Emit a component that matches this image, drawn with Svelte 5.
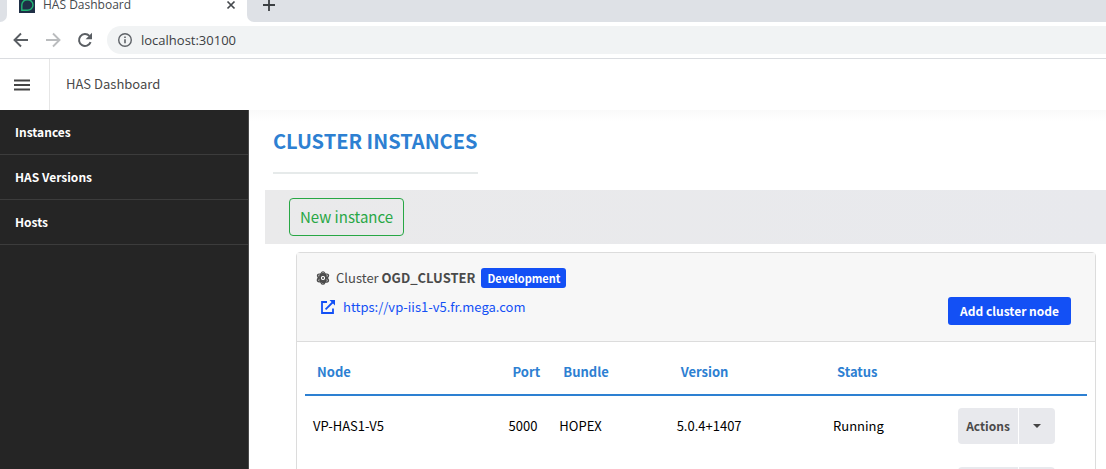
<script>
  const menu = ["Instances", "HAS Versions", "Hosts"];
  const columns = ["Node", "Port", "Bundle", "Version", "Status"];

  let address = $state("localhost:30100");
  let nodes = $state([
    { name: "VP-HAS1-V5", port: "5000", bundle: "HOPEX", version: "5.0.4+1407", status: "Running" },
    { name: "", port: "", bundle: "", version: "", status: "" },
  ]);
</script>

<div class="window">
  <div class="tabs">
    <div class="tab-prev"></div>
    <div class="tab">
      <svg class="favicon" width="16" height="16" viewBox="0 0 16 16">
        <rect width="16" height="16" fill="#1f2f46" />
        <path d="M2.800 13.300V8a5.600 5.300 0 1 1 5.600 5.300z" fill="none" stroke="#21b573" stroke-width="1.400" />
      </svg>
      <span class="tab-title">HAS Dashboard</span>
      <button class="plain" aria-label="Close tab">
        <svg width="10" height="10" viewBox="0 0 10 10"><path d="M1.500 1.500l7 7M8.500 1.500l-7 7" stroke="#45494d" stroke-width="1.700" /></svg>
      </button>
    </div>
    <div class="tab-rest">
      <button class="plain" aria-label="New tab">
        <svg width="12" height="12" viewBox="0 0 12 12"><path d="M6 0v12M0 6h12" stroke="#3c4043" stroke-width="1.800" /></svg>
      </button>
    </div>
  </div>

  <div class="browser-bar">
    <button class="plain" aria-label="Back">
      <svg width="16" height="16" viewBox="0 0 16 16"><path d="M15 8H2M8 1.500L1.500 8 8 14.500" fill="none" stroke="#5a5e63" stroke-width="1.900" /></svg>
    </button>
    <button class="plain" aria-label="Forward">
      <svg width="16" height="16" viewBox="0 0 16 16"><path d="M1 8h13M8 1.500L14.500 8 8 14.500" fill="none" stroke="#babcbe" stroke-width="1.900" /></svg>
    </button>
    <button class="plain" aria-label="Reload">
      <svg width="16" height="16" viewBox="0 0 16 16">
        <path d="M13.600 10.200A6 6 0 1 1 12.400 3.900" fill="none" stroke="#5a5e63" stroke-width="2" />
        <path d="M15 .8v6.400H8.600z" fill="#5a5e63" />
      </svg>
    </button>
    <label class="address">
      <svg width="16" height="16" viewBox="0 0 16 16">
        <circle cx="8" cy="8" r="6.300" fill="none" stroke="#5f6368" stroke-width="1.400" />
        <path d="M8 7.200v4M8 4.400v1.500" stroke="#5f6368" stroke-width="1.600" />
      </svg>
      <span class="url"><input aria-label="Address" bind:value={address} /></span>
    </label>
  </div>

  <header class="app-bar">
    <button class="burger" aria-label="Toggle menu">
      <svg width="16" height="12" viewBox="0 0 16 12"><path d="M0 1.500h16M0 6h16M0 10.500h16" stroke="#444" stroke-width="1.800" /></svg>
    </button>
    <span class="app-name">HAS Dashboard</span>
  </header>

  <div class="body">
    <nav class="sidebar">
      {#each menu as item}
        <a href="#{item}">{item}</a>
      {/each}
    </nav>

    <main>
      <h1>CLUSTER INSTANCES</h1>

      <div class="toolbar">
        <button class="new-instance">New instance</button>
      </div>

      <section class="card">
        <div class="card-head">
          <div class="cluster">
            <div class="cluster-name">
              <svg width="14" height="14" viewBox="0 0 14 14" fill="none" stroke="#4a4a4a" stroke-width="1.300">
                {#each [30, 90, 150] as angle}
                  <ellipse cx="7" cy="7" rx="6.200" ry="2.700" transform="rotate({angle} 7 7)" />
                {/each}
                <path d="M7 2.200l4.200 2.400v4.800L7 11.800 2.800 9.400V4.600z" stroke-width="1" />
                <circle cx="7" cy="7" r="1" fill="#4a4a4a" stroke="none" />
              </svg>
              <span>Cluster <b>OGD_CLUSTER</b></span>
              <span class="badge">Development</span>
            </div>
            <a class="cluster-link" href="https://vp-iis1-v5.fr.mega.com">
              <svg width="14" height="14" viewBox="0 0 14 14" fill="none" stroke="#1350f5" stroke-width="1.800">
                <path d="M6 2H1v11h11V8.500" />
                <path d="M4.600 9.400L12 2" />
                <path d="M8.500 0H14v5.500z" fill="#1350f5" stroke="none" />
              </svg>
              <span>https://vp-iis1-v5.fr.mega.com</span>
            </a>
          </div>
          <button class="add-node">Add cluster node</button>
        </div>

        <table>
          <thead>
            <tr>
              {#each columns as column}
                <th>{column}</th>
              {/each}
              <th aria-label="Actions"></th>
            </tr>
          </thead>
          <tbody>
            {#each nodes as node}
              <tr>
                <td>{node.name}</td>
                <td>{node.port}</td>
                <td>{node.bundle}</td>
                <td>{node.version}</td>
                <td>{node.status}</td>
                <td>
                  <div class="split">
                    <button>Actions</button>
                    <button class="caret" aria-label="More actions">
                      <svg width="8" height="4" viewBox="0 0 8 4"><path d="M0 0h8L4 4z" fill="#444" /></svg>
                    </button>
                  </div>
                </td>
              </tr>
            {/each}
          </tbody>
        </table>
      </section>
    </main>
  </div>
</div>

<style>
  :global(body) {
    margin: 0;
    background: #fff;
  }

  .window {
    display: flex;
    flex-direction: column;
    height: 100vh;
    overflow: hidden;
    font-family: "Noto Sans CJK SC", "Source Sans Pro", sans-serif;
    font-size: 13px;
    line-height: 20px;
    color: #4a4a4a;
  }

  button {
    font: inherit;
    cursor: pointer;
  }

  svg {
    flex-shrink: 0;
  }

  .plain {
    display: flex;
    padding: 0;
    border: 0;
    background: none;
  }

  /* browser frame */
  .tabs {
    display: flex;
    flex-shrink: 0;
    height: 22px;
    background: #fff;
    font-family: "Open Sans", "Segoe UI", sans-serif;
    font-size: 12px;
  }

  .tab-prev {
    width: 7px;
    background: #dee1e6;
    border-bottom-right-radius: 7px;
  }

  .tab {
    display: flex;
    align-items: flex-end;
    box-sizing: border-box;
    width: 240px;
    padding: 0 11px 9px 12px;
  }

  .tab-title {
    flex: 1;
    margin: 0 8px -2px;
    line-height: 20px;
    color: #45494d;
  }

  .tab .plain {
    margin-bottom: 3px;
  }

  .favicon {
    display: block;
  }

  .tab-rest {
    flex: 1;
    display: flex;
    align-items: flex-end;
    padding: 0 16px 11px;
    background: #dee1e6;
    border-bottom-left-radius: 7px;
  }

  .browser-bar {
    display: flex;
    flex-shrink: 0;
    align-items: center;
    gap: 16px;
    height: 36px;
    padding-left: 13px;
    border-bottom: 1px solid #dadce0;
  }

  .address {
    flex: 1;
    display: flex;
    align-items: center;
    gap: 8px;
    height: 28px;
    margin-left: -2px;
    padding-left: 10px;
    background: #f1f3f4;
    border-radius: 14px 0 0 14px;
  }

  .url {
    flex: 1;
    display: flex;
  }

  .url input {
    width: 100%;
    padding: 0;
    border: 0;
    background: none;
    color: #3c4043;
    font-family: "Open Sans", "Segoe UI", sans-serif;
    font-size: 13px;
    outline: none;
  }

  /* application */
  .app-bar {
    display: flex;
    flex-shrink: 0;
    align-items: center;
    height: 51px;
    background: #fff;
  }

  .burger {
    display: flex;
    align-items: center;
    box-sizing: border-box;
    width: 50px;
    height: 100%;
    padding: 0 0 0 14px;
    border: 0;
    border-right: 1px solid #e6e6e6;
    background: none;
  }

  .app-name {
    margin-left: 16px;
    padding-bottom: 2px;
  }

  .body {
    flex: 1;
    display: flex;
    min-height: 0;
  }

  .sidebar {
    flex-shrink: 0;
    width: 248px;
    background: #252525;
    border-right: 1px solid #4a4a4a;
  }

  .sidebar a {
    display: block;
    padding: 12px 15px;
    border-bottom: 1px solid #3c3c3c;
    color: #fff;
    font-size: 12px;
    font-weight: 700;
    text-decoration: none;
  }

  main {
    flex: 1;
    min-width: 0;
    padding-left: 16px;
    background: linear-gradient(#f9f9f9, #fff 12px);
  }

  h1 {
    width: fit-content;
    margin: 0 0 16px 8px;
    padding: 16px 0;
    border-bottom: 2px solid #e6eaea;
    color: #2d80d2;
    font-size: 20px;
    line-height: 30px;
    font-weight: 700;
  }

  .toolbar {
    padding: 8px 24px;
    background: linear-gradient(90deg, #eaeaeb, #e8e9ed);
  }

  .new-instance {
    display: block;
    height: 38px;
    padding: 0 10px;
    border: 1px solid #28a745;
    border-radius: 4px;
    background: none;
    color: #28a745;
    font-size: 15px;
  }

  .card {
    margin: 8px 10px 0 31px;
    border: 1px solid #dcdcdc;
    border-radius: 4px;
  }

  .card-head {
    display: flex;
    align-items: flex-end;
    justify-content: space-between;
    padding: 15px 24px 16px 19px;
    border-bottom: 1px solid #dcdcdc;
    background: #f7f7f7;
  }

  .cluster {
    display: flex;
    flex-direction: column;
    gap: 9px;
    padding-bottom: 8px;
  }

  .cluster-name,
  .cluster-link {
    display: flex;
    align-items: center;
    gap: 6px;
  }

  .cluster-link {
    gap: 8px;
    padding-left: 5px;
    color: #1350f5;
    text-decoration: none;
  }

  .badge {
    padding: 0 6px;
    border-radius: 3px;
    background: #1350f5;
    color: #fff;
    font-size: 11px;
    font-weight: 700;
  }

  .add-node {
    height: 28px;
    padding: 0 12px;
    border: 0;
    border-radius: 3px;
    background: #1350f5;
    color: #fff;
    font-size: 12px;
    font-weight: 700;
  }

  table {
    width: calc(100% - 16px);
    margin: 8px;
    border-collapse: collapse;
    table-layout: fixed;
    color: #000;
  }

  th {
    height: 45px;
    padding: 0 12px;
    border-bottom: 2px solid #2d80d2;
    color: #2d80d2;
    font-weight: 700;
    text-align: left;
  }

  th:nth-child(1) { width: 25%; }
  th:nth-child(2) { width: 6.5%; }
  th:nth-child(3) { width: 15%; }
  th:nth-child(4) { width: 20%; }
  th:nth-child(5) { width: 16%; }

  th,
  td {
    box-sizing: border-box;
    white-space: nowrap;
  }

  td {
    height: 60px;
    padding: 0 8px;
  }

  .split {
    display: flex;
    gap: 1px;
  }

  .split button {
    height: 36px;
    padding: 0 8px;
    border: 0;
    border-radius: 4px 0 0 4px;
    background: #e8e9ed;
    color: #4a4a4a;
    font-size: 12px;
    font-weight: 700;
  }

  .split .caret {
    display: flex;
    align-items: center;
    padding: 0 14px;
    border-radius: 0 4px 4px 0;
  }
</style>
